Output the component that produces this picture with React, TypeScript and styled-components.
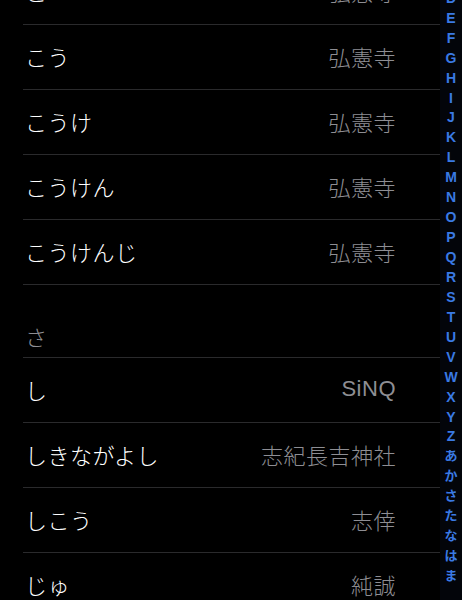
import React from 'react';
import styled, { createGlobalStyle } from 'styled-components';

const GlobalStyle = createGlobalStyle`
  html, body {
    margin: 0;
    padding: 0;
    background: #000000;
    overflow: hidden;
  }
`;

const Screen = styled.div`
  display: flex;
  flex-direction: row;
  width: 462px;
  height: 600px;
  overflow: hidden;
  background: #000000;
  font-family: 'Liberation Sans', 'Noto Sans CJK JP', sans-serif;
`;

const List = styled.div`
  flex: 1;
  margin-top: -40px;
`;

const Row = styled.div`
  display: flex;
  align-items: center;
  justify-content: space-between;
  height: 65px;
  margin-left: 23px;
  padding: 0 44px 2px 2px;
  box-sizing: border-box;
  border-bottom: 1px solid #2a2a2c;
  font-size: 22px;
  font-weight: 300;
`;

const Reading = styled.span`
  color: #ffffff;
  letter-spacing: 0.5px;
`;

const Name = styled.span`
  color: #8e8e93;
  letter-spacing: 0.5px;
`;

const SectionHeader = styled.div`
  height: 73px;
  margin-left: 23px;
  padding: 0 2px;
  box-sizing: border-box;
  padding-top: 40px;
  border-bottom: 1px solid #2a2a2c;
  font-size: 22px;
  font-weight: 300;
  line-height: 28px;
  color: #8e8e93;
`;

const Index = styled.div`
  width: 22px;
  display: flex;
  flex-direction: column;
  align-items: center;
  margin-top: -72px;
  background: #03050a;
`;

const IndexLetter = styled.div<{ $kana?: boolean }>`
  height: 19.95px;
  line-height: 20px;
  font-size: ${({ $kana }) => ($kana ? '13px' : '14px')};
  font-weight: 700;
  color: #3a7ae4;
`;

type Entry = { reading: string; name: string } | { header: string };

const entries: Entry[] = [
  { reading: 'こ', name: '弘憲寺' },
  { reading: 'こう', name: '弘憲寺' },
  { reading: 'こうけ', name: '弘憲寺' },
  { reading: 'こうけん', name: '弘憲寺' },
  { reading: 'こうけんじ', name: '弘憲寺' },
  { header: 'さ' },
  { reading: 'し', name: 'SiNQ' },
  { reading: 'しきながよし', name: '志紀長吉神社' },
  { reading: 'しこう', name: '志倖' },
  { reading: 'じゅ', name: '純誠' },
];

const latin = 'ABCDEFGHIJKLMNOPQRSTUVWXYZ'.split('');
const kana = ['あ', 'か', 'さ', 'た', 'な', 'は', 'ま'];

const App = () => (
  <>
    <GlobalStyle />
    <Screen>
      <List>
        {entries.map((entry, index) =>
          'header' in entry ? (
            <SectionHeader key={index}>{entry.header}</SectionHeader>
          ) : (
            <Row key={index}>
              <Reading>{entry.reading}</Reading>
              <Name>{entry.name}</Name>
            </Row>
          )
        )}
      </List>
      <Index>
        {latin.map((letter) => (
          <IndexLetter key={letter}>{letter}</IndexLetter>
        ))}
        {kana.map((letter) => (
          <IndexLetter key={letter} $kana>{letter}</IndexLetter>
        ))}
      </Index>
    </Screen>
  </>
);

export default App;
